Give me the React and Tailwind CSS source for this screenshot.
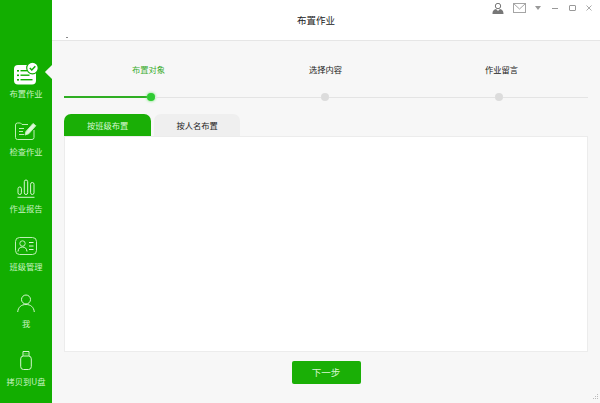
const FONT = { fontFamily: '"Noto Sans CJK SC", "Liberation Sans", sans-serif' };

const I = {
  assign: (
    <svg width="26" height="23" viewBox="0 0 26 23">
      <rect x="1" y="3" width="22" height="19.500" rx="4" fill="#fff" />
      <g fill="#12ae00">
        <rect x="4" y="8" width="2" height="1.600" /><rect x="4" y="12.500" width="2" height="1.600" /><rect x="4" y="17" width="2" height="1.600" />
        <rect x="7.500" y="8" width="7" height="1.400" /><rect x="7.500" y="12.500" width="9" height="1.400" /><rect x="7.500" y="17" width="12" height="1.400" />
      </g>
      <circle cx="19.500" cy="6" r="5.800" fill="#fff" stroke="#12ae00" strokeWidth="1.200" />
      <path d="M16.800 6l2 2 3.500-3.700" fill="none" stroke="#12ae00" strokeWidth="1.500" />
    </svg>
  ),
  check: (
    <svg width="23" height="18" viewBox="0 0 23 18" fill="none" stroke="#bdf0b5" strokeWidth="1">
      <path d="M13 2.500H7L5.500 1H2.500A2 2 0 0 0 .5 3v12.500a2 2 0 0 0 2 2h14.500a2 2 0 0 0 2-2V8" />
      <path d="M4 6.500h5M4 9.500h4M4 12.500h5" />
      <path d="M10 13l1-3.500 7-8 2.800 2.200-7 8z" fill="#dff8da" />
    </svg>
  ),
  report: (
    <svg width="18" height="19" viewBox="0 0 18 19" fill="none" stroke="#d5f6cf" strokeWidth="1">
      <rect x="1" y="8" width="3.400" height="7.500" rx="1.700" />
      <rect x="7.300" y="1" width="3.400" height="14.500" rx="1.700" />
      <rect x="13.600" y="3.500" width="3.400" height="12" rx="1.700" />
      <path d="M.5 18.300h17" />
    </svg>
  ),
  cls: (
    <svg width="22" height="18" viewBox="0 0 22 18" fill="none" stroke="#bdf0b5" strokeWidth="1">
      <rect x=".5" y=".5" width="21" height="17" rx="4" />
      <circle cx="7.500" cy="6.500" r="2.700" />
      <path d="M3 14.500c.3-3 1.800-4.500 4.500-4.500s4.200 1.500 4.500 4.500M14 5.500h4.500M14 9h4.500M14 12.500h4.500" stroke="#dff8da" />
    </svg>
  ),
  me: (
    <svg width="18" height="19" viewBox="0 0 18 19" fill="none" stroke="#d5f6cf" strokeWidth="1">
      <circle cx="9" cy="5.500" r="4.500" />
      <path d="M.7 18c.5-5 3.700-7.500 8.300-7.500s7.800 2.500 8.300 7.500" />
    </svg>
  ),
  usb: (
    <svg width="12" height="19" viewBox="0 0 12 19" fill="none" stroke="#d5f6cf" strokeWidth="1">
      <path d="M3 5V.5h6V5" />
      <path d="M5 2.500v.8M7 2.500v.8" />
      <rect x=".7" y="5" width="10.600" height="13.500" rx="2.800" />
    </svg>
  ),
};

const NAV = [
  ["布置作业", I.assign],
  ["检查作业", I.check],
  ["作业报告", I.report],
  ["班级管理", I.cls],
  ["我", I.me],
  ["拷贝到U盘", I.usb],
];

function Sidebar() {
  return (
    <aside className="w-[52px] shrink-0 bg-[#12ae00] pt-[58px] flex flex-col">
      {NAV.map(([label, icon]) => (
        <div key={label} className="h-[57.500px] flex flex-col items-center">
          <div className="h-[30px] flex items-center justify-center">{icon}</div>
          <div className="text-[8.250px] leading-[12px] -mt-[1px] whitespace-nowrap text-[#c8f3c1]">{label}</div>
        </div>
      ))}
    </aside>
  );
}

function WindowControls() {
  return (
    <div className="absolute top-[1px] right-[8px] flex items-center h-[14px]">
      <svg width="12" height="11" viewBox="0 0 12 11" className="mr-[9px]">
        <circle cx="6" cy="3" r="2.700" fill="#fff" stroke="#777" />
        <path d="M.5 11c0-3.500 1.500-4.500 3.500-5l2 2 2-2c2 .5 3.500 1.500 3.500 5z" fill="#777" />
      </svg>
      <svg width="13" height="10" viewBox="0 0 13 10" fill="none" stroke="#a5a5a5" className="mr-[9px]">
        <rect x=".5" y=".5" width="12" height="9" />
        <path d="M.5.500L6.500 6l6-5.500" />
      </svg>
      <svg width="6" height="4" viewBox="0 0 6 4" className="mr-[11px]"><path d="M0 0h6L3 4z" fill="#999" /></svg>
      <span className="w-[6px] h-[1px] bg-[#999] mr-[11px]" />
      <span className="w-[7px] h-[6px] border border-[#999] rounded-[1px] mr-[10px]" />
      <svg width="6" height="6" viewBox="0 0 6 6" stroke="#aaa"><path d="M.5.500l5 5M5.500.500l-5 5" /></svg>
    </div>
  );
}

function Dot({ active }) {
  return active ? (
    <span className="w-[8px] h-[8px] rounded-full bg-[#2ecb32] shrink-0 shadow-[0_0_3px_#5fe05f]" />
  ) : (
    <span className="w-[8px] h-[8px] rounded-full bg-[#dcdcdc] shrink-0" />
  );
}

export default function App() {
  return (
    <div className="w-[600px] h-[403px] flex overflow-hidden" style={FONT}>
      <Sidebar />
      <main className="relative flex-1 flex flex-col bg-[#f7f7f7]">
        <span className="absolute left-[-5px] top-[67px] w-[10px] h-[10px] rotate-45 bg-[#f7f7f7]" />
        <header className="relative h-[41px] shrink-0 bg-white border-b border-[#e6e6e6] flex items-start justify-center pt-[14px] pr-[20px]">
          <span className="text-[9.500px] leading-[13px] text-[#222]">布置作业</span>
          <WindowControls />
          <span className="absolute left-[14px] top-[37px] w-[2px] h-[1px] bg-[#888]" />
        </header>

        <div className="flex-1 flex flex-col pl-[12px] pr-[12px]">
          <div className="h-[12px] mt-[22px] text-[8.250px] leading-[12px] text-[#222] flex">
            <span className="w-[168px] pl-[68px] text-[#3aad2e] whitespace-nowrap">布置对象</span>
            <span className="w-[176px] pl-[77px] whitespace-nowrap">选择内容</span>
            <span className="whitespace-nowrap pl-[77px]">作业留言</span>
          </div>

          <div className="flex items-center h-[8px] mt-[18px]">
            <span className="w-[83px] h-[2px] bg-[#2fae23]" />
            <Dot active />
            <span className="w-[166px] h-[1px] bg-[#e4e4e4]" />
            <Dot />
            <span className="w-[166px] h-[1px] bg-[#e4e4e4]" />
            <Dot />
            <span className="flex-1 h-[1px] bg-[#e4e4e4]" />
          </div>

          <div className="flex gap-[3px] mt-[13px] h-[22px] text-[8.250px] leading-[22px]">
            <div className="w-[87px] rounded-t-[7px] bg-[#1aaf06] text-[#d8f8d2] text-center">按班级布置</div>
            <div className="w-[86px] rounded-t-[7px] bg-[#efefef] text-[#222] text-center">按人名布置</div>
          </div>

          <div className="h-[216px] bg-white border border-[#ececec]" />

          <button className="self-center mt-[9px] w-[69px] h-[23px] rounded-[2px] bg-[#1aaf06] text-[#d8f8d2] text-[9.500px] leading-[23px]">
            下一步
          </button>
        </div>
        <svg width="5" height="5" viewBox="0 0 5 5" fill="#bbb" className="absolute right-[2px] bottom-[4px]">
          <rect x="4" y="0" width="1" height="1" /><rect x="2" y="2" width="1" height="1" /><rect x="4" y="2" width="1" height="1" />
          <rect x="0" y="4" width="1" height="1" /><rect x="2" y="4" width="1" height="1" /><rect x="4" y="4" width="1" height="1" />
        </svg>
      </main>
    </div>
  );
}
